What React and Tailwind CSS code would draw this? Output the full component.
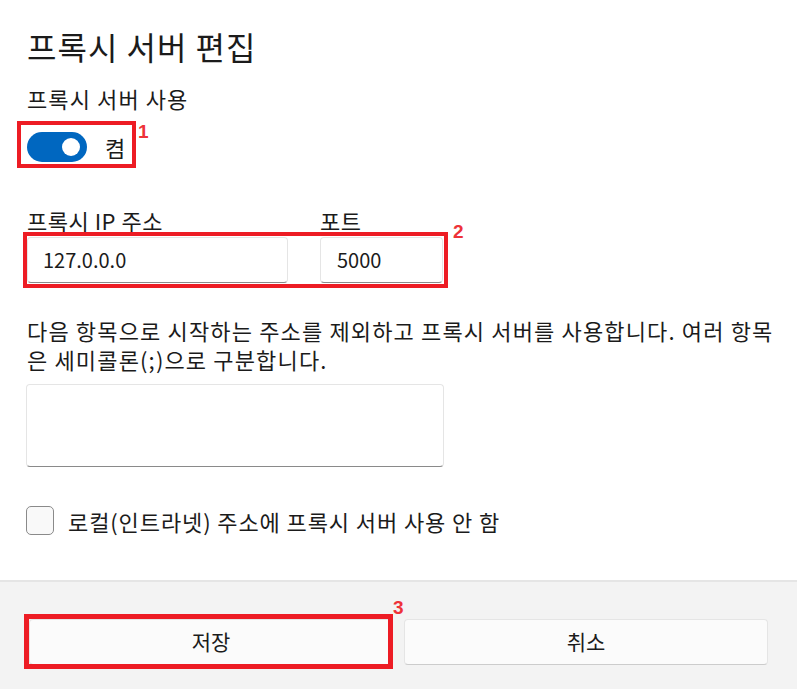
export default function App() {
    return (
        <div className="relative w-[797px] h-[689px] bg-white flex flex-col text-[#1b1b1b] font-['Noto_Sans_CJK_KR','Noto_Sans',sans-serif]">
            <div className="flex-1 pl-[27px] pt-[26px]">
                <h1 className="text-[32px] leading-[40px] tracking-[1px]">프록시 서버 편집</h1>
                <div className="mt-[18px] text-[22px] leading-[28px] tracking-[1.1px]">프록시 서버 사용</div>
                <div className="mt-[20px] flex items-center gap-[18px]">
                    <div className="w-[60px] h-[30px] rounded-full bg-[#0067c0] flex items-center justify-end pr-[7px]">
                        <div className="w-[18px] h-[18px] rounded-full bg-white" />
                    </div>
                    <span className="text-[22px] leading-[28px]">켬</span>
                </div>

                <div className="mt-[44px] flex gap-[32px]">
                    <div className="flex flex-col">
                        <label className="text-[22px] leading-[28px] tracking-[0.5px]">프록시 IP 주소</label>
                        <div className="mt-[3px] w-[261px] h-[46px] rounded-[4px] border border-[#e5e5e5] border-b-[#8a8a8a] bg-white flex items-center pl-[15px] text-[20px]">127.0.0.0</div>
                    </div>
                    <div className="flex flex-col">
                        <label className="text-[22px] leading-[28px] tracking-[0.5px]">포트</label>
                        <div className="mt-[3px] w-[123px] h-[46px] rounded-[4px] border border-[#e5e5e5] border-b-[#8a8a8a] bg-white flex items-center pl-[16px] text-[20px]">5000</div>
                    </div>
                </div>

                <p className="mt-[33px] text-[22px] leading-[29px] tracking-[1.15px] whitespace-nowrap">
                    다음 항목으로 시작하는 주소를 제외하고 프록시 서버를 사용합니다. 여러 항목
                    <br />
                    은 세미콜론(;)으로 구분합니다.
                </p>
                <div className="mt-[10px] -ml-px w-[418px] h-[83px] rounded-[4px] border border-[#e5e5e5] border-b-[#8a8a8a] bg-white" />

                <div className="mt-[39px] -ml-px flex items-center gap-[14px]">
                    <div className="w-[28px] h-[29px] rounded-[5px] border border-[#8a8a8a] bg-[#f9f9f9]" />
                    <span className="text-[22px] leading-[28px] tracking-[0.9px]">로컬(인트라넷) 주소에 프록시 서버 사용 안 함</span>
                </div>
            </div>

            <div className="h-[109px] bg-[#f3f3f3] border-t-2 border-[#e5e5e5] px-[29px] pt-[37px] flex gap-[11px]">
                <button className="flex-1 h-[46px] rounded-[4px] bg-[#fbfbfb] border border-[#e5e5e5] border-b-[#cccccc] text-[21px]">저장</button>
                <button className="flex-1 h-[46px] rounded-[4px] bg-[#fbfbfb] border border-[#e5e5e5] border-b-[#cccccc] text-[21px]">취소</button>
            </div>

            {/* annotations */}
            <div className="absolute left-[17px] top-[121px] w-[119px] h-[47px] border-4 border-[#ed1c24]" />
            <span className="absolute left-[138px] top-[118px] text-[19px] font-bold text-[#ee3238] font-['Liberation_Sans',sans-serif]">1</span>
            <div className="absolute left-[23px] top-[232px] w-[425px] h-[56px] border-4 border-[#ed1c24]" />
            <span className="absolute left-[453px] top-[218px] text-[19px] font-bold text-[#ee3238] font-['Liberation_Sans',sans-serif]">2</span>
            <div className="absolute left-[24px] top-[614px] w-[369px] h-[55px] border-[5px] border-[#ed1c24]" />
            <span className="absolute left-[393px] top-[594px] text-[19px] font-bold text-[#ee3238] font-['Liberation_Sans',sans-serif]">3</span>
        </div>
    );
}
